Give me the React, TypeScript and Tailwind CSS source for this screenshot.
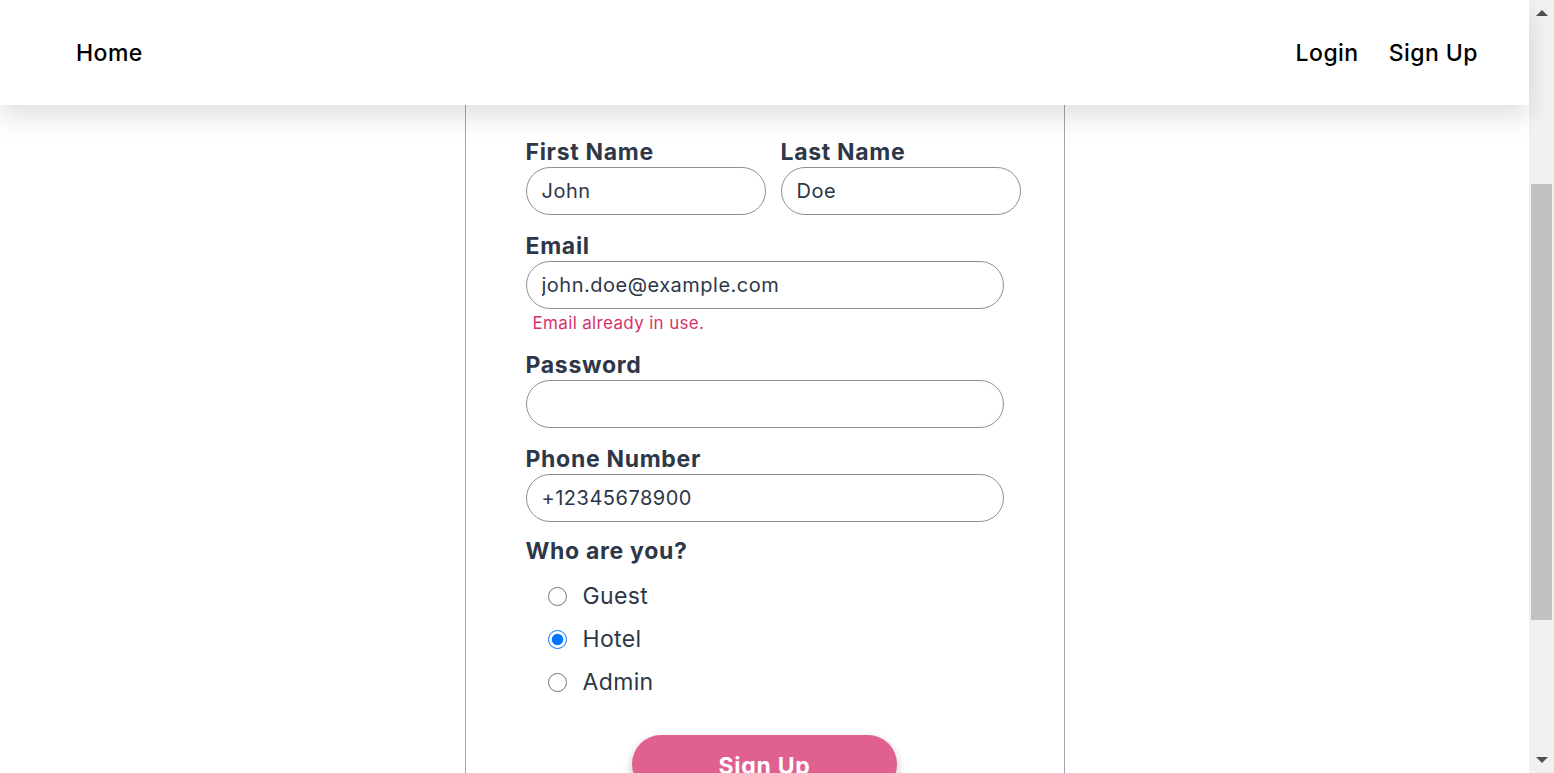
const font = { fontFamily: 'Inter, "Noto Sans", sans-serif' };

function Field({ label, value, width }: { label: string; value: string; width: string }) {
  return (
    <div className={width}>
      <label className="block text-[23px] leading-[26px] font-bold tracking-[0.03em] text-[#2d3748]">{label}</label>
      <input
        readOnly
        value={value}
        className="mt-[2px] block h-[48px] w-full rounded-full border border-[#8f8f9d] bg-white px-[15px] text-[20px] tracking-[0.025em] text-[#2d3748] outline-none"
      />
    </div>
  );
}

function Radio({ label, checked }: { label: string; checked?: boolean }) {
  return (
    <label className="flex h-[43px] items-center pl-[22px]">
      <input
        type="radio"
        name="role"
        defaultChecked={checked}
        className="m-0 h-[19px] w-[19px] accent-[#0075ff]"
      />
      <span className="ml-[16px] text-[23px] tracking-[0.015em] text-[#2d3748]">{label}</span>
    </label>
  );
}

export default function App() {
  return (
    <div className="flex h-screen w-full overflow-hidden bg-white" style={font}>
      <div className="relative flex min-w-0 flex-1 flex-col">
        <header className="relative z-10 flex h-[105px] shrink-0 items-center justify-between bg-white pl-[76px] pr-[51px] pt-[2px] shadow-[0_12px_24px_rgba(0,0,0,0.12)]">
          <a className="text-[23px] font-medium tracking-[0.02em] text-black">Home</a>
          <nav className="flex gap-[30px] text-[23px] font-medium tracking-[0.02em] text-black">
            <a>Login</a>
            <a>Sign Up</a>
          </nav>
        </header>
        <main className="flex flex-1 justify-center">
          <div className="w-[600px] border-x border-[#a3a3b5] pl-[60px] pt-[34px]">
            <div className="flex gap-[15px]">
              <Field label="First Name" value="John" width="w-[240px]" />
              <Field label="Last Name" value="Doe" width="w-[240px]" />
            </div>
            <div className="mt-[18px]">
              <Field label="Email" value="john.doe@example.com" width="w-[478px]" />
              <p className="mt-[4px] pl-[7px] text-[17px] leading-[20px] tracking-[0.02em] text-[#d6336c]">Email already in use.</p>
            </div>
            <div className="mt-[19px]">
              <Field label="Password" value="" width="w-[478px]" />
            </div>
            <div className="mt-[18px]">
              <Field label="Phone Number" value="+12345678900" width="w-[478px]" />
            </div>
            <p className="mt-[16px] text-[23px] leading-[26px] font-bold tracking-[0.03em] text-[#2d3748]">Who are you?</p>
            <div className="mt-[11px] flex flex-col">
              <Radio label="Guest" />
              <Radio label="Hotel" checked />
              <Radio label="Admin" />
            </div>
            <div className="mt-[31px] flex justify-center pr-[60px]">
              <button className="h-[58px] w-[265px] rounded-full bg-[#e06090] pt-[4px] text-[23px] font-bold tracking-[0.03em] text-white shadow-[0_4px_10px_rgba(0,0,0,0.25)]">
                Sign Up
              </button>
            </div>
          </div>
        </main>
      </div>
      <div className="flex w-[25px] shrink-0 flex-col items-center bg-[#f1f1f1]">
        <div className="mt-[10px] h-0 w-0 border-x-[6px] border-b-[6px] border-x-transparent border-b-[#505050]" />
        <div className="mt-[168px] h-[436px] w-[21px] bg-[#c1c1c1]" />
        <div className="mt-auto mb-[10px] h-0 w-0 border-x-[6px] border-t-[6px] border-x-transparent border-t-[#505050]" />
      </div>
    </div>
  );
}
